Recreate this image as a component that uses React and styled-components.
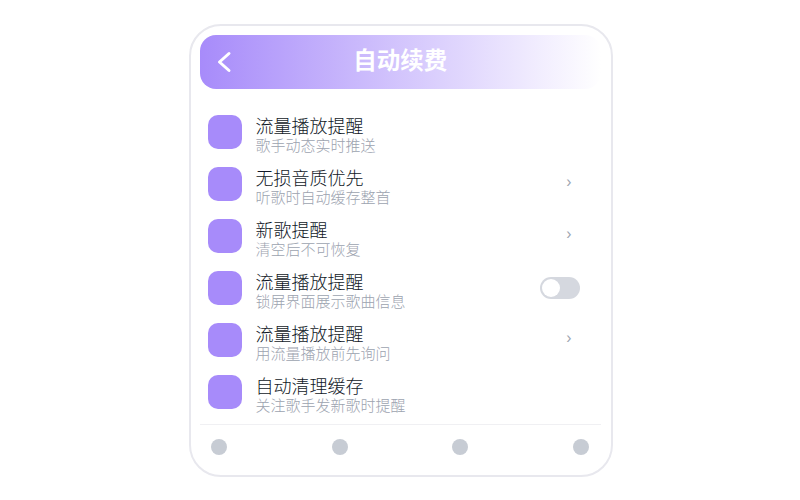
import React from 'react';
import styled, { createGlobalStyle } from 'styled-components';

const GlobalStyle = createGlobalStyle`
  html, body {
    margin: 0;
    padding: 0;
    background: #ffffff;
    font-family: "Inter", "Noto Sans CJK SC", sans-serif;
  }
`;

const Page = styled.div`
  width: 800px;
  height: 500px;
  display: flex;
  padding: 24px 0 0 189px;
  box-sizing: border-box;
`;

const Phone = styled.div`
  width: 423.5px;
  height: 453px;
  box-sizing: border-box;
  border: 2px solid #e8e8ee;
  border-radius: 32px;
  padding: 9px 10px 0 9px;
  background: #ffffff;
  display: flex;
  flex-direction: column;
`;

const Header = styled.div`
  height: 54px;
  flex: none;
  border-radius: 16px;
  background: linear-gradient(90deg, #a78bfa, #ffffff);
  display: flex;
  align-items: center;
  justify-content: center;
  position: relative;
`;

const BackIcon = styled.svg`
  position: absolute;
  left: 9.5px;
  top: 12.5px;
`;

const Title = styled.div`
  color: #ffffff;
  font-size: 23.5px;
  font-weight: 700;
  line-height: 30px;
  margin-top: -2px;
`;

const List = styled.div`
  flex: none;
  display: flex;
  flex-direction: column;
  padding: 17px 8px 6px 7.5px;
`;

const Row = styled.div`
  height: 52px;
  flex: none;
  display: flex;
  align-items: center;
`;

const Square = styled.div`
  width: 34px;
  height: 34px;
  flex: none;
  border-radius: 10px;
  background: #a78bfa;
  margin-right: 14px;
`;

const Texts = styled.div`
  flex: 1;
  display: flex;
  flex-direction: column;
  padding-top: 8px;
`;

const RowTitle = styled.div`
  font-size: 18px;
  font-weight: 300;
  line-height: 20px;
  color: #111827;
`;

const RowSub = styled.div`
  font-size: 15px;
  font-weight: 300;
  line-height: 18px;
  color: #9ca3af;
`;

const Chevron = styled.div`
  font-size: 14px;
  line-height: 14px;
  color: #9ca3af;
  width: 14px;
  margin: 0 16.5px 4px 0;
  text-align: center;
`;

const Switch = styled.div`
  width: 40px;
  height: 22px;
  border-radius: 11px;
  background: #d5d8df;
  margin-right: 13px;
  position: relative;
`;

const Knob = styled.div`
  position: absolute;
  left: 2px;
  top: 2px;
  width: 18px;
  height: 18px;
  border-radius: 50%;
  background: #ffffff;
`;

const Footer = styled.div`
  height: 44px;
  flex: none;
  border-top: 1px solid #f0f0f3;
  display: flex;
  align-items: center;
  justify-content: space-between;
  padding: 0 11.5px 0 11px;
`;

const Dot = styled.div`
  width: 16px;
  height: 16px;
  border-radius: 50%;
  background: #c7ccd4;
`;

const rows = [
  { title: '流量播放提醒', sub: '歌手动态实时推送' },
  { title: '无损音质优先', sub: '听歌时自动缓存整首', right: 'chevron' },
  { title: '新歌提醒', sub: '清空后不可恢复', right: 'chevron' },
  { title: '流量播放提醒', sub: '锁屏界面展示歌曲信息', right: 'switch' },
  { title: '流量播放提醒', sub: '用流量播放前先询问', right: 'chevron' },
  { title: '自动清理缓存', sub: '关注歌手发新歌时提醒' },
];

export default function App() {
  return (
    <Page>
      <GlobalStyle />
      <Phone>
        <Header>
          <BackIcon width="28" height="28" viewBox="0 0 28 28" fill="none">
            <path d="M19 5.5 L9.5 14 L19 22.5" stroke="#ffffff" strokeWidth="3" strokeLinecap="round" strokeLinejoin="round" />
          </BackIcon>
          <Title>自动续费</Title>
        </Header>
        <List>
          {rows.map((r, i) => (
            <Row key={i}>
              <Square />
              <Texts>
                <RowTitle>{r.title}</RowTitle>
                <RowSub>{r.sub}</RowSub>
              </Texts>
              {r.right === 'chevron' && <Chevron>›</Chevron>}
              {r.right === 'switch' && (
                <Switch>
                  <Knob />
                </Switch>
              )}
            </Row>
          ))}
        </List>
        <Footer>
          <Dot />
          <Dot />
          <Dot />
          <Dot />
        </Footer>
      </Phone>
    </Page>
  );
}
